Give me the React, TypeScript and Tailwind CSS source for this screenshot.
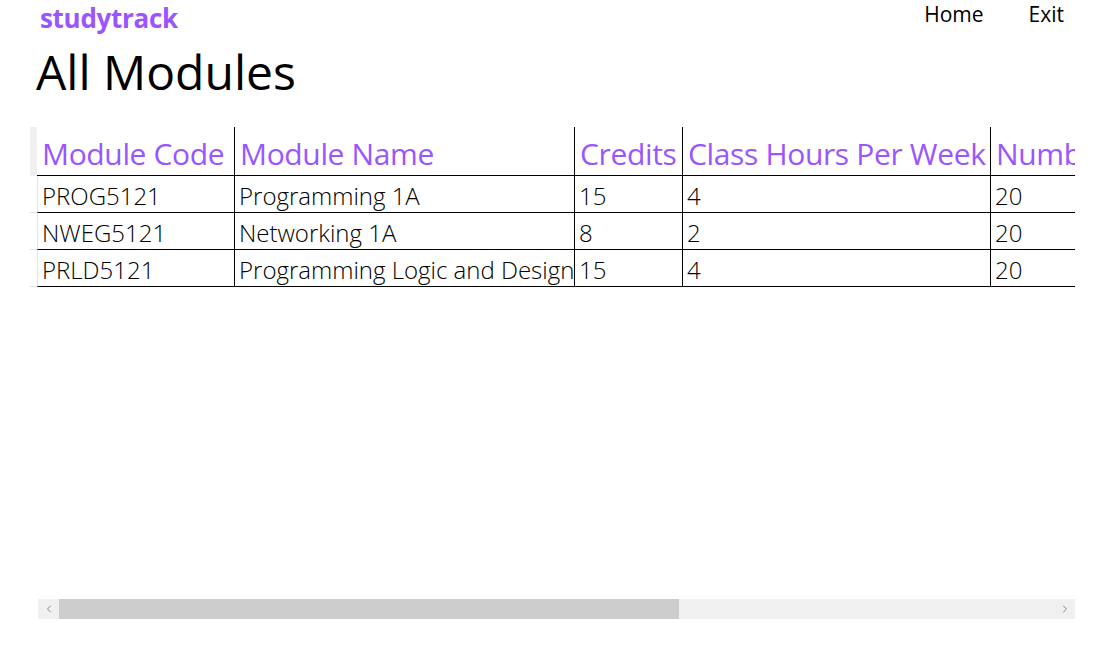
import { ChevronLeft, ChevronRight } from "lucide-react";

interface Module {
  code: string;
  name: string;
  credits: number;
  hours: number;
  weeks: number;
}

const modules: Module[] = [
  { code: "PROG5121", name: "Programming 1A", credits: 15, hours: 4, weeks: 20 },
  { code: "NWEG5121", name: "Networking 1A", credits: 8, hours: 2, weeks: 20 },
  { code: "PRLD5121", name: "Programming Logic and Design", credits: 15, hours: 4, weeks: 20 },
];

const headers = [
  { label: "Module Code", w: "w-[198px]" },
  { label: "Module Name", w: "w-[340px]" },
  { label: "Credits", w: "w-[108px]" },
  { label: "Class Hours Per Week", w: "w-[308px]" },
  { label: "Number Of Weeks", w: "w-[280px]" },
];

export default function App() {
  return (
    <div className="w-[1110px] h-[662px] bg-white text-black font-['Open_Sans',sans-serif] overflow-hidden">
      {/* top bar */}
      <div className="flex items-start justify-between pl-[40px] pr-[46px] h-[40px]">
        <span className="text-[26px] leading-[36px] font-bold text-[#9a55ff] tracking-[-0.3px]">studytrack</span>
        <nav className="flex gap-[45px] text-[21px] leading-[28px]">
          <span>Home</span>
          <span>Exit</span>
        </nav>
      </div>

      <h1 className="pl-[36px] text-[48px] leading-[60px] mt-[2px]">All Modules</h1>

      {/* data grid */}
      <div className="ml-[30px] mt-[25px] w-[1045px]">
        <div className="flex h-[472px]">
          <div className="w-[7px] flex flex-col">
            <div className="h-[49px] bg-[#f0f0f0]" />
            {modules.map((m) => (
              <div key={m.code} className="h-[37px] border-b border-[#e3e3e3]" />
            ))}
          </div>
          <div className="flex-1 overflow-hidden">
            <div className="w-[1300px]">
              <div className="flex h-[49px] border-b border-black">
                {headers.map((h, i) => (
                  <div
                    key={h.label}
                    className={`${h.w} shrink-0 px-[5px] pt-[8px] text-[30px] leading-[38px] tracking-[-0.35px] text-[#9a55ff] whitespace-nowrap ${i < headers.length - 1 ? "border-r border-black" : ""}`}
                  >
                    {h.label}
                  </div>
                ))}
              </div>
              {modules.map((m) => (
                <div key={m.code} className="flex h-[37px] border-b border-black border-l border-l-[#e3e3e3] font-light text-[24px] leading-[40px]">
                  <div className="w-[197px] shrink-0 px-[4px] border-r border-black">{m.code}</div>
                  <div className="w-[340px] shrink-0 px-[4px] border-r border-black whitespace-nowrap">{m.name}</div>
                  <div className="w-[108px] shrink-0 px-[4px] border-r border-black">{m.credits}</div>
                  <div className="w-[308px] shrink-0 px-[4px] border-r border-black">{m.hours}</div>
                  <div className="w-[280px] shrink-0 px-[4px]">{m.weeks}</div>
                </div>
              ))}
            </div>
          </div>
        </div>

        {/* horizontal scrollbar */}
        <div className="ml-[8px] flex h-[20px] bg-[#f0f0f0]">
          <div className="w-[21px] flex items-center justify-center text-[#888888]">
            <ChevronLeft size={12} strokeWidth={2} />
          </div>
          <div className="w-[620px] bg-[#cdcdcd]" />
          <div className="flex-1" />
          <div className="w-[20px] flex items-center justify-center text-[#888888]">
            <ChevronRight size={12} strokeWidth={2} />
          </div>
        </div>
      </div>
    </div>
  );
}
